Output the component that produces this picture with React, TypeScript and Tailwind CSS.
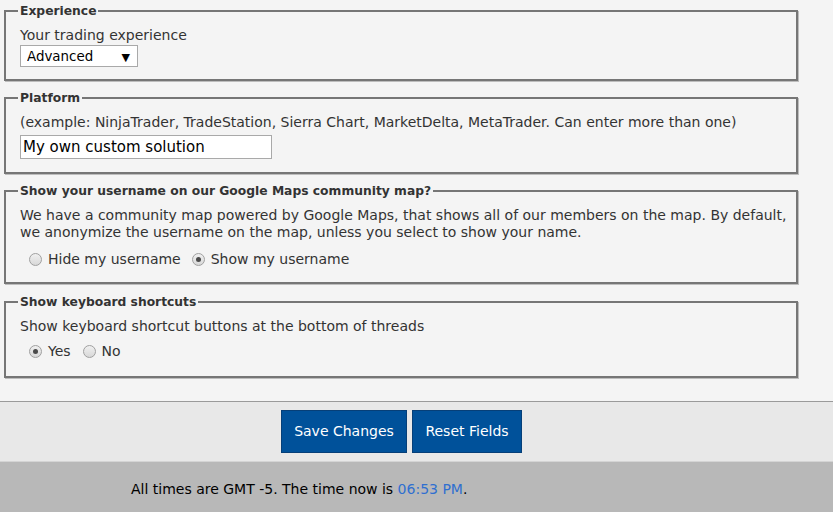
import { ReactNode } from "react";

const font = { fontFamily: '"DejaVu Sans", Verdana, sans-serif' };

function Box({ title, className, children }: { title: string; className: string; children: ReactNode }) {
  return (
    <fieldset
      className={`w-[794px] border-2 border-[#767676] shadow-[1px_1px_0_#bdbdbd] pl-[14px] pr-1 pt-[8px] ${className}`}
    >
      <legend className="-ml-0.5 px-0.5 font-bold text-[12.3px] leading-[16px] text-[#333]">
        {title}
      </legend>
      {children}
    </fieldset>
  );
}

function Radio({ label, checked }: { label: string; checked?: boolean }) {
  return (
    <label className="flex items-center gap-[6px]">
      <span className="w-[13px] h-[13px] rounded-full border border-[#a0a0a0] bg-gradient-to-b from-[#f0f0f0] to-[#d8d8d8] flex items-center justify-center">
        {checked && <span className="w-[5px] h-[5px] rounded-full bg-[#4a4a4a]" />}
      </span>
      <span>{label}</span>
    </label>
  );
}

export default function App() {
  return (
    <div style={font} className="min-h-[512px] bg-[#f4f4f4] text-[14px] leading-[17px] text-[#333] flex flex-col">
      <div className="pl-1 pt-[3px] pb-[23px]">
        <Box title="Experience" className="pb-[12px] mb-[9px]">
          <div>Your trading experience</div>
          <div className="relative w-[118px] mt-[1px]">
            <select
              defaultValue="Advanced"
              className="appearance-none w-full h-[22px] border border-[#a9a9a9] bg-white pl-[6px] text-[13.4px] text-black outline-none"
            >
              <option>Beginner</option>
              <option>Intermediate</option>
              <option>Advanced</option>
            </select>
            <span className="absolute right-[8px] top-[4px] text-[11px] text-black pointer-events-none">▼</span>
          </div>
        </Box>

        <Box title="Platform" className="pb-[13px] mb-[9px]">
          <div>
            (example: NinjaTrader, TradeStation, Sierra Chart, MarketDelta, MetaTrader. Can enter more than one)
          </div>
          <input
            defaultValue="My own custom solution"
            className="mt-[4px] w-[252px] h-[24px] border border-[#a9a9a9] bg-white px-[2px] text-[15px] text-black outline-none"
          />
        </Box>

        <Box title="Show your username on our Google Maps community map?" className="pb-[14px] mb-[10px]">
          <div>
            We have a community map powered by Google Maps, that shows all of our members on the map. By default,
            we anonymize the username on the map, unless you select to show your name.
          </div>
          <div className="flex gap-[11px] pl-[9px] mt-[10px]">
            <Radio label="Hide my username" />
            <Radio label="Show my username" checked />
          </div>
        </Box>

        <Box title="Show keyboard shortcuts" className="pb-[16px]">
          <div>Show keyboard shortcut buttons at the bottom of threads</div>
          <div className="flex gap-[12px] pl-[9px] mt-[8px]">
            <Radio label="Yes" checked />
            <Radio label="No" />
          </div>
        </Box>
      </div>

      <div className="border-t border-[#9a9a9a] bg-[#e8e8e8] h-[60px] flex">
        <div className="w-[803px] flex justify-center items-center gap-[5px]">
          <button className="w-[126px] h-[43px] bg-[#00519a] border border-[#063f78] text-white text-[14px]">
            Save Changes
          </button>
          <button className="w-[110px] h-[43px] bg-[#00519a] border border-[#063f78] text-white text-[14px]">
            Reset Fields
          </button>
        </div>
      </div>

      <div className="flex-1 border-t border-[#d4d4d4] bg-[#b8b8b8] pl-[131px] pt-[19px] text-black">
        All times are GMT -5. The time now is <span className="text-[#2f6fd0]">06:53 PM</span>.
      </div>
    </div>
  );
}
